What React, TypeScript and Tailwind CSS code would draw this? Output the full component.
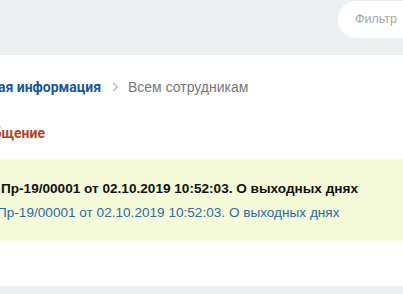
import React from "react";

export default function App() {
    return (
        <div className="w-[403px] h-[294px] overflow-hidden bg-white font-['Liberation_Sans',Arial,sans-serif]">
            {/* Шапка с фильтром */}
            <div className="h-[55px] bg-[#edf0f3] flex justify-end items-start pt-[1px]">
                <div className="w-[65px] h-[37px] bg-white rounded-l-full flex items-center pl-[17px]">
                    <span className="text-[12.5px] text-[#a7a7a7] whitespace-nowrap">Фильтр</span>
                </div>
            </div>

            {/* Хлебные крошки */}
            <div className="mt-[24px] flex items-center h-[16px] leading-[16px] whitespace-nowrap">
                <div className="w-[101px] overflow-hidden flex justify-end shrink-0">
                    <span className="text-[14px] font-bold text-[#1b5796] font-['Roboto',sans-serif]">Служебная информация</span>
                </div>
                <svg className="ml-[11px] shrink-0" width="7" height="10" viewBox="0 0 7 10" fill="none">
                    <path d="M1 1l4.5 4L1 9" stroke="#b5b5b5" strokeWidth="1.3" />
                </svg>
                <span className="ml-[9px] text-[14px] text-[#777]">Всем сотрудникам</span>
            </div>

            {/* Заголовок раздела */}
            <div className="mt-[30px] h-[16px] leading-[16px] whitespace-nowrap">
                <div className="w-[45px] overflow-hidden flex justify-end">
                    <span className="text-[14px] font-bold text-[#b2461a] font-['Roboto',sans-serif]">Сообщение</span>
                </div>
            </div>

            {/* Сообщение */}
            <div className="mt-[18px] h-[82px] bg-[#f5fad9] pt-[22px] text-[13.6px] leading-[16px] whitespace-nowrap">
                <div className="pl-[1px] font-bold text-[#111]">Пр-19/00001 от 02.10.2019 10:52:03. О выходных днях</div>
                <div className="mt-[8px] -ml-[3px] text-[#2e6aa2]">Пр-19/00001 от 02.10.2019 10:52:03. О выходных днях</div>
            </div>

            <div className="mt-[45px] h-[8px] bg-[#edf0f3]" />
        </div>
    );
}
